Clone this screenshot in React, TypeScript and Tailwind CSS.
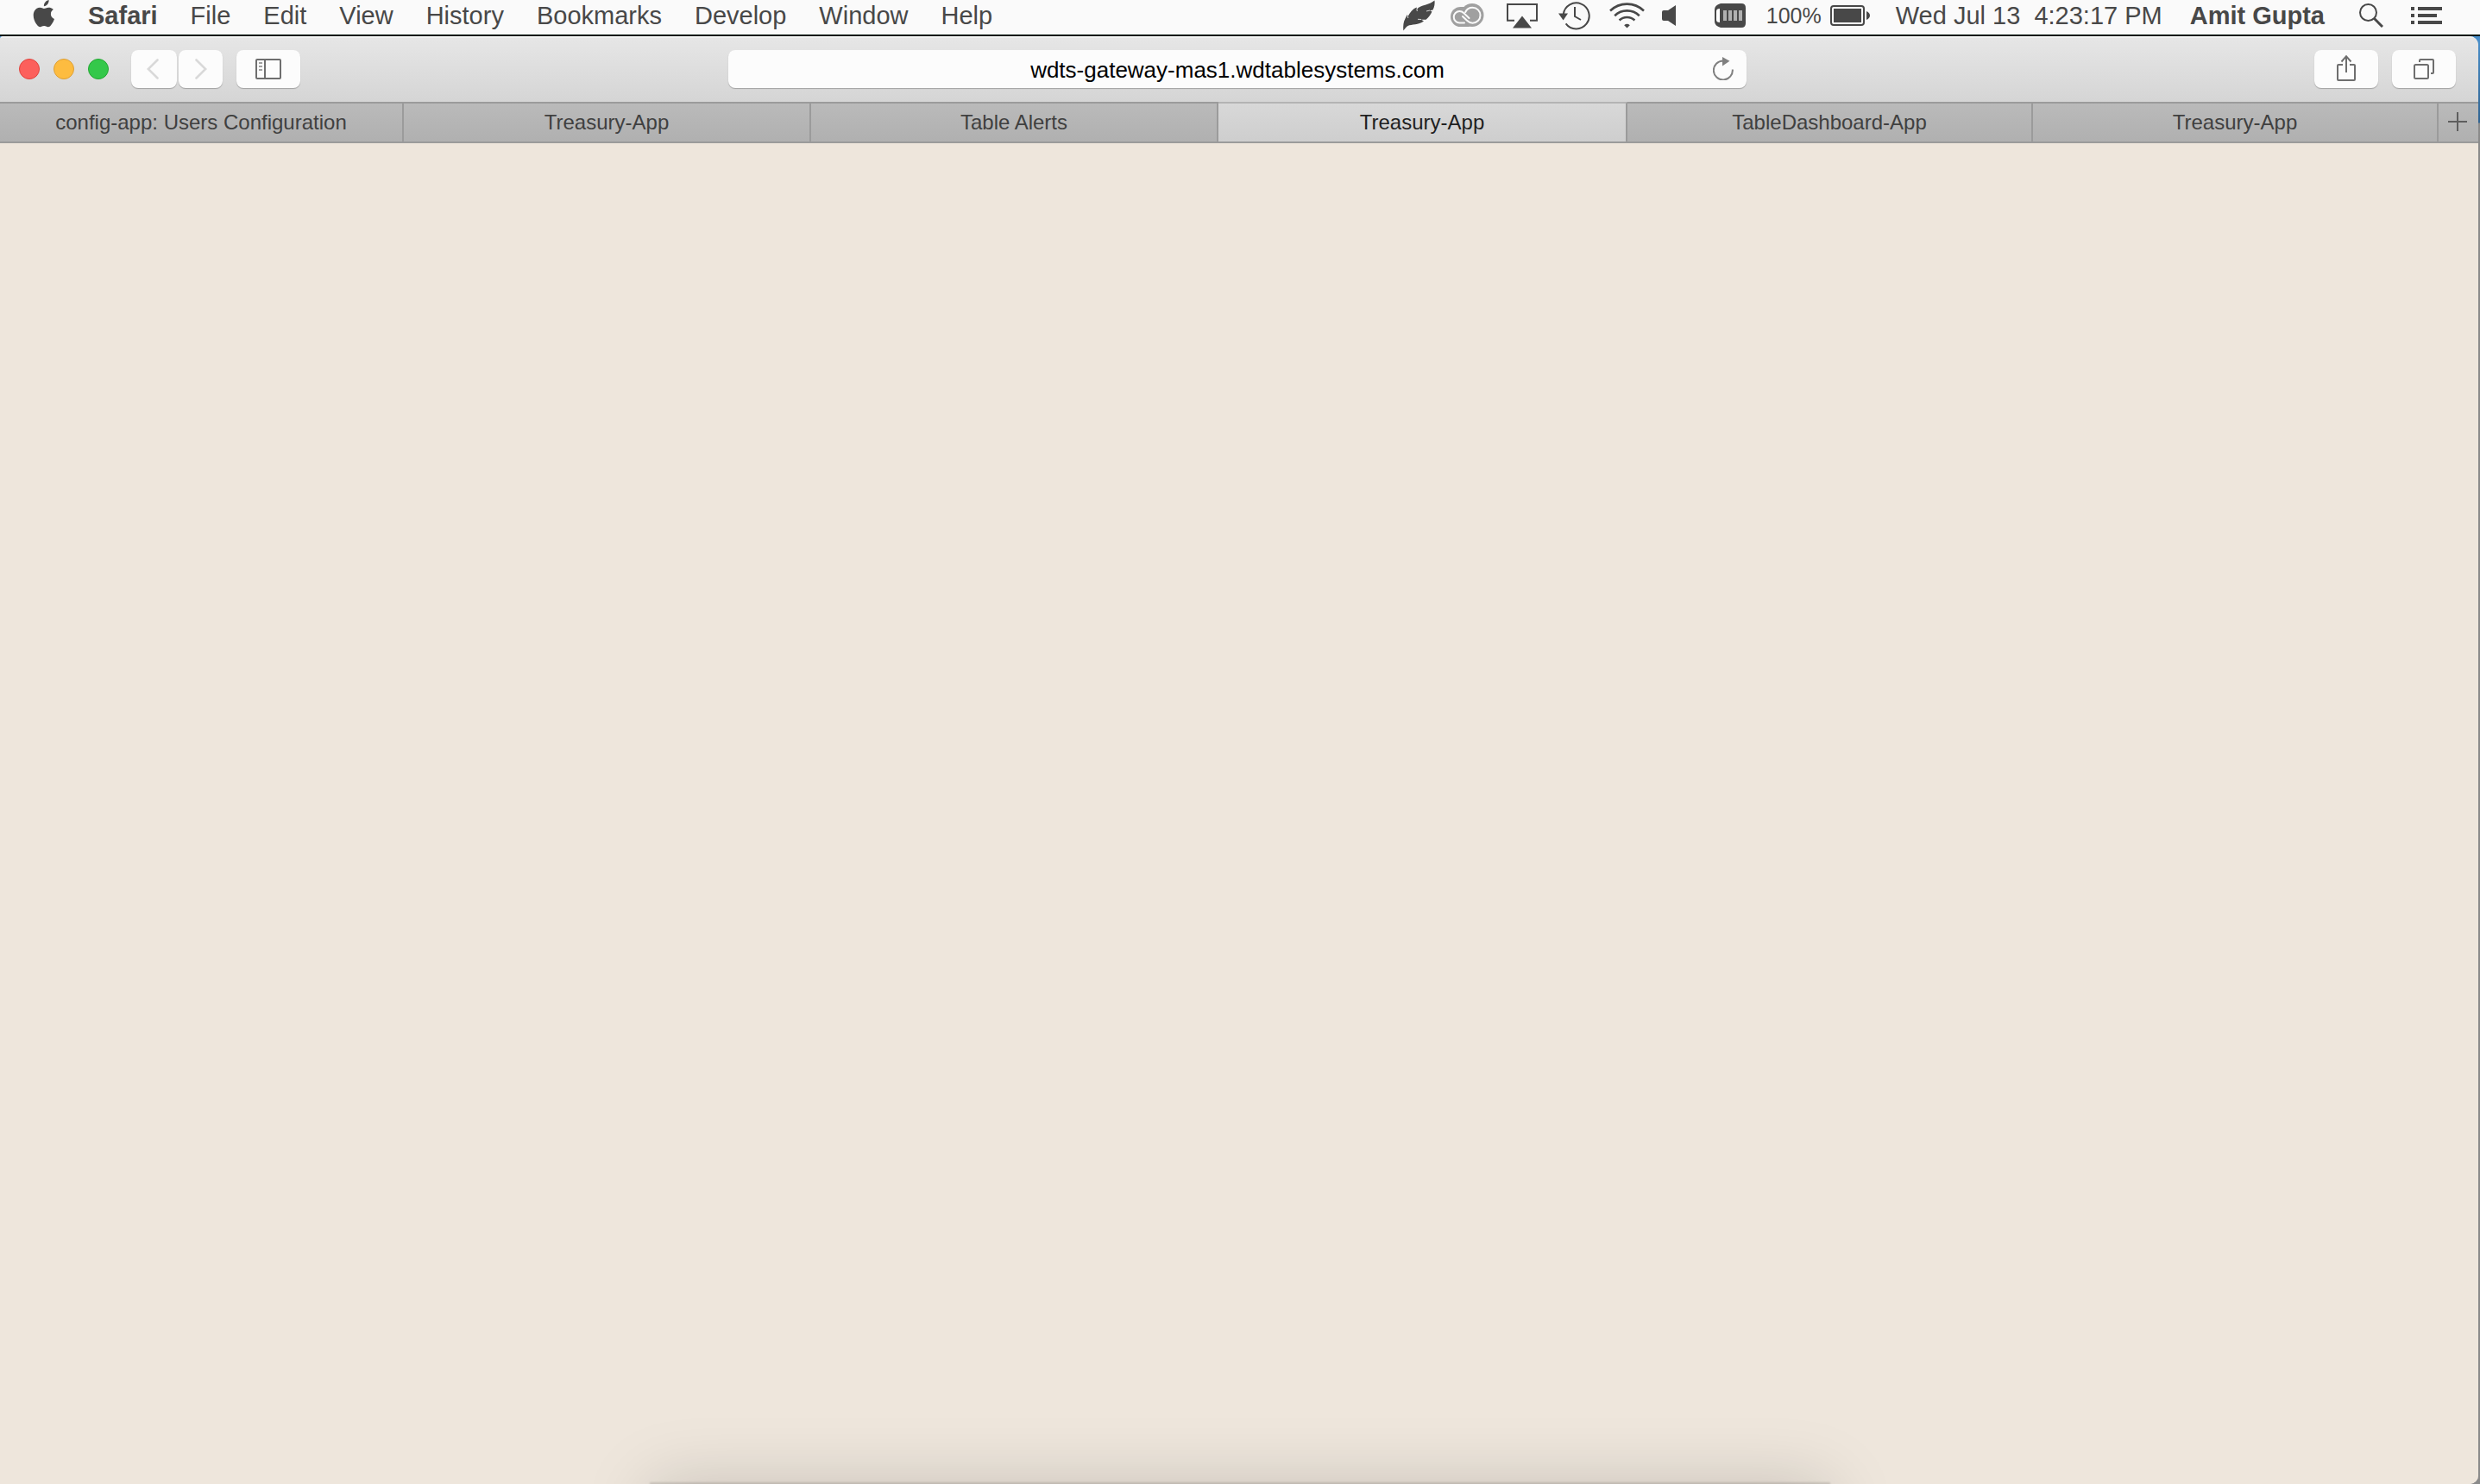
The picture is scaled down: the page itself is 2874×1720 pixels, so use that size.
import React from "react";

const menus = ["File", "Edit", "View", "History", "Bookmarks", "Develop", "Window", "Help"];

const tabs = [
  { title: "config-app: Users Configuration", active: false },
  { title: "Treasury-App", active: false },
  { title: "Table Alerts", active: false },
  { title: "Treasury-App", active: true },
  { title: "TableDashboard-App", active: false },
  { title: "Treasury-App", active: false },
];

const toolButton =
  "flex h-11 items-center justify-center rounded-lg bg-[#fcfcfc] shadow-[0_1px_1px_rgba(0,0,0,0.25)]";

function AppleIcon() {
  return (
    <svg width="26" height="32" viewBox="0 0 26 32" fill="#484848">
      <path d="M18.6 0C18.8 2 18 3.900 16.800 5.300 15.600 6.700 14 7.300 12.900 7.200 12.700 5.300 13.500 3.500 14.700 2.200 15.800 1 17.400 0.100 18.600 0Z" />
      <path d="M24.900 11C23 12.200 21.900 13.900 21.900 16.200 21.900 18.900 23.500 21 26 22 25.400 23.900 24.400 25.900 23.100 27.700 21.900 29.500 20.700 31.200 18.800 31.200 16.900 31.300 16.300 30.100 14.100 30.100 11.900 30.100 11.200 31.200 9.400 31.300 7.500 31.400 6.200 29.400 4.900 27.600 2.300 23.900 0.300 17.200 3 12.600 4.300 10.300 6.700 8.900 9.200 8.800 11.100 8.800 12.800 10 14 10 15.200 10 17.300 8.500 19.700 8.700 20.700 8.700 23.400 9.100 24.900 11Z" transform="translate(-1 0)" />
    </svg>
  );
}

function FeatherIcon() {
  return (
    <svg width="37" height="36" viewBox="0 0 37 36" fill="#484848">
      <path d="M0.300 35.500C0 30 0.300 25 2.500 21.500L4.800 17 5.600 19C8 14.500 11 10.500 15.600 8.500L16 10.500C21 5.500 30 6 36.500 0.500 36.900 4 36.500 8 34.500 11.500L31 12.300 33.500 13.500C32 17 29.500 20.500 26.500 22.800L21 22.800 24 24.500C18 29 10 28 5.500 30 3.500 31 2 33.500 0.300 35.500Z" />
      <path d="M31 12L27 13M21 22.500L17 22.300M15.900 10L16.300 13M5.400 18.500L5.800 21" stroke="#fafafa" strokeWidth="0.800" />
    </svg>
  );
}

function CloudIcon() {
  return (
    <svg width="39" height="28" viewBox="0 0 39 28">
      <rect x="0" y="4" width="30" height="23" rx="11.500" fill="#a0a0a0" />
      <circle cx="25" cy="13.500" r="13.500" fill="#a0a0a0" />
      <path
        d="M16 22.500H10.500A6.500 6.500 0 0 1 10.500 9C12.500 9 14 9.800 15.500 11.200L21.500 17M14 15L19 19.800C21 21.700 22.800 22.700 25.500 22.700A9 9 0 0 0 25.500 4.700C21.500 4.700 18.500 7 17.200 10"
        fill="none" stroke="#fafafa" strokeWidth="2" strokeLinecap="round"
      />
    </svg>
  );
}

function AirplayIcon() {
  return (
    <svg width="36" height="29" viewBox="0 0 36 29">
      <path d="M9 19.800H1V1H35V19.800H27" fill="none" stroke="#484848" strokeWidth="2" />
      <path d="M18 14.500L29 28.500H7Z" fill="#484848" />
    </svg>
  );
}

function TimeMachineIcon() {
  return (
    <svg width="37" height="33" viewBox="0 0 37 33" fill="none" stroke="#484848" strokeWidth="2">
      <path d="M5.800 14.500A15 15 0 1 1 8.600 25.300" />
      <path d="M0 13.500H11L5.600 21.500Z" fill="#484848" stroke="none" />
      <path d="M19 6V17L26 21" />
    </svg>
  );
}

function WifiIcon() {
  return (
    <svg width="41" height="30" viewBox="0 0 41 30" fill="none" stroke="#484848" strokeWidth="2.600">
      <path d="M1 9.500A28 28 0 0 1 40 9.500" />
      <path d="M6.200 15.200A20.500 20.500 0 0 1 34.800 15.200" />
      <path d="M11.600 20.500A13 13 0 0 1 29.400 20.500" />
      <path d="M20.500 29.500L17.200 26.200A5 5 0 0 1 23.800 26.200Z" fill="#484848" stroke="none" />
    </svg>
  );
}

function SpeakerIcon() {
  return (
    <svg width="17" height="24" viewBox="0 0 17 24" fill="#484848">
      <path d="M2 6H7L16 0V24L7 18H2Q0 18 0 16V8Q0 6 2 6Z" />
    </svg>
  );
}

function MeterIcon() {
  return (
    <svg width="36" height="28" viewBox="0 0 36 28">
      <path d="M7 0H31Q36 0 36 5V23Q36 28 31 28H7Q0 26 0 21V7Q0 2 7 0Z" fill="#484848" />
      <path d="M6 6Q2 6 2 9V19Q2 22 6 22Z" fill="#fff" />
      <path d="M12 8V20M18 8V20M24 8V20M30 8V20" stroke="#b0b0b0" strokeWidth="4" />
    </svg>
  );
}

function BatteryIcon() {
  return (
    <svg width="46" height="24" viewBox="0 0 46 24">
      <rect x="1" y="1" width="38" height="22" rx="3" fill="none" stroke="#484848" strokeWidth="2" />
      <rect x="4" y="4" width="32" height="16" fill="#484848" />
      <path d="M42 7Q46 9 46 12T42 17Z" fill="#484848" />
    </svg>
  );
}

function SearchIcon() {
  return (
    <svg width="28" height="28" viewBox="0 0 28 28" fill="none" stroke="#484848">
      <circle cx="10.500" cy="10.500" r="9.500" strokeWidth="2" />
      <path d="M17.500 17.500L27 27" strokeWidth="3" />
    </svg>
  );
}

function ListIcon() {
  return (
    <svg width="36" height="20" viewBox="0 0 36 20" fill="#484848">
      <path d="M0 0H4V4H0ZM8 0H36V4H8ZM0 8H4V12H0ZM8 8H30V12H8ZM0 16H4V20H0ZM8 16H36V20H8Z" />
    </svg>
  );
}

function MenuBar() {
  return (
    <header className="flex h-10 shrink-0 items-start bg-[#fafafa] pr-11 pl-[38px] text-[29px] leading-9 text-[#484848]">
      <nav aria-label="Application menu" className="flex gap-[38px] whitespace-nowrap">
        <button aria-label="Apple" className="flex"><AppleIcon /></button>
        <button className="font-bold">Safari</button>
        {menus.map((m) => (
          <button key={m}>{m}</button>
        ))}
      </nav>
      <div className="ml-auto flex h-9 items-center whitespace-nowrap">
        <button aria-label="Notes"><FeatherIcon /></button>
        <button aria-label="Creative Cloud" className="ml-[18px]"><CloudIcon /></button>
        <button aria-label="AirPlay" className="ml-[26px]"><AirplayIcon /></button>
        <button aria-label="Time Machine" className="ml-6"><TimeMachineIcon /></button>
        <button aria-label="Wi-Fi" className="ml-[22px]"><WifiIcon /></button>
        <button aria-label="Volume" className="ml-5"><SpeakerIcon /></button>
        <button aria-label="Memory" className="ml-11"><MeterIcon /></button>
        <button aria-label="Battery" className="ml-6 flex items-center gap-[10px] text-[25px]"><span>100%</span><BatteryIcon /></button>
        <button className="ml-[30px] whitespace-pre">{"Wed Jul 13  4:23:17 PM"}</button>
        <button className="ml-8 font-bold">Amit Gupta</button>
        <button aria-label="Search" className="ml-10"><SearchIcon /></button>
        <button aria-label="Notification Center" className="ml-8"><ListIcon /></button>
      </div>
    </header>
  );
}

function Toolbar() {
  return (
    <div className="grid h-[76px] grid-cols-[1fr_41.8%_1fr] items-center border-t-2 border-[#f3f3f3] bg-linear-to-b from-[#e6e6e6] to-[#d5d5d5] pr-[26px] pb-0.5 pl-[22px]">
      <div className="flex items-center">
        <div className="flex gap-4">
          <button aria-label="Close" className="size-6 rounded-full border border-[#e0443e] bg-[#fc605c]" />
          <button aria-label="Minimize" className="size-6 rounded-full border border-[#dd9f35] bg-[#fdbc40]" />
          <button aria-label="Zoom" className="size-6 rounded-full border border-[#24a833] bg-[#34c84a]" />
        </div>
        <div className="ml-[26px] flex gap-0.5">
          <button aria-label="Back" className={`${toolButton} w-[53px] pr-1`}>
            <svg width="14" height="24" viewBox="0 0 14 24" fill="none" stroke="#d9d9d9" strokeWidth="2.600" strokeLinecap="round">
              <path d="M12.500 1.500L1.800 12L12.500 22.500" />
            </svg>
          </button>
          <button aria-label="Forward" className={`${toolButton} w-[51px]`}>
            <svg width="14" height="24" viewBox="0 0 14 24" fill="none" stroke="#d9d9d9" strokeWidth="2.600" strokeLinecap="round">
              <path d="M1.500 1.500L12.200 12L1.500 22.500" />
            </svg>
          </button>
        </div>
        <button aria-label="Show sidebar" className={`${toolButton} ml-4 w-[74px]`}>
          <svg width="30" height="24" viewBox="0 0 30 24" fill="none" stroke="#6e6e6e" strokeWidth="2">
            <rect x="1" y="1" width="28" height="22" rx="1" />
            <path d="M11 1V23" />
            <path d="M4 5H8M4 9H8M4 13H8" stroke="#a0a0a0" />
          </svg>
        </button>
      </div>

      <div className="flex h-11 items-center rounded-lg bg-[#fcfcfc] pl-[42px] shadow-[0_1px_1px_rgba(0,0,0,0.25)]">
        <input
          aria-label="Address"
          defaultValue="wdts-gateway-mas1.wdtablesystems.com"
          className="h-11 min-w-0 flex-1 bg-transparent pt-0.5 text-center text-[26px] text-black outline-none"
        />
        <button aria-label="Reload" className="flex w-[42px] justify-center pr-3 pb-0.5">
          <svg width="24" height="27" viewBox="0 0 24 27">
            <path d="M22.800 14.500A11 11 0 1 1 12 4.500" fill="none" stroke="#808080" strokeWidth="2" />
            <path d="M11 0L19.500 4.800L11 10.500Z" fill="#808080" />
          </svg>
        </button>
      </div>

      <div className="flex justify-end gap-4">
        <button aria-label="Share" className={`${toolButton} w-[74px] pb-0.5`}>
          <svg width="24" height="32" viewBox="0 0 24 32" fill="none" stroke="#6e6e6e" strokeWidth="2">
            <path d="M8 12H3Q2 12 2 13V29Q2 30 3 30H21Q22 30 22 29V13Q22 12 21 12H16" />
            <path d="M12 21V2M6.500 8.500L12 2.200L17.500 8.500" />
          </svg>
        </button>
        <button aria-label="Show all tabs" className={`${toolButton} w-[74px]`}>
          <svg width="24" height="24" viewBox="0 0 24 24" fill="none" stroke="#6e6e6e" strokeWidth="2">
            <rect x="1" y="7" width="16" height="16" rx="1.500" />
            <path d="M7 4V2Q7 1 8 1H22Q23 1 23 2V16Q23 17 22 17H20" />
          </svg>
        </button>
      </div>
    </div>
  );
}

function TabBar() {
  return (
    <div role="tablist" className="grid h-12 grid-cols-[468fr_472fr_472fr_474fr_470fr_470fr_46px] text-2xl">
      {tabs.map((t, i) => (
        <button
          key={i}
          role="tab"
          aria-selected={t.active}
          className={
            t.active
              ? "border-y-2 border-r-2 border-[#9b9b9b] border-t-[#b4b4b4] bg-linear-to-b from-[#d8d8d8] to-[#cecece] text-[#1f1f1f]"
              : "border-y-2 border-r-2 border-[#9b9b9b] bg-linear-to-b from-[#bababa] to-[#b0b0b0] text-[#404040]"
          }
        >
          {t.title}
        </button>
      ))}
      <button aria-label="New tab" className="flex items-center justify-center border-y-2 border-[#9b9b9b] bg-linear-to-b from-[#bababa] to-[#b0b0b0] pr-0.5 pb-0.5">
        <svg width="22" height="22" viewBox="0 0 22 22" stroke="#5e5e5e" strokeWidth="2">
          <path d="M11 0V22M0 11H22" />
        </svg>
      </button>
    </div>
  );
}

export default function App() {
  return (
    <div className="relative flex h-screen flex-col overflow-hidden bg-[#04170d] font-['Liberation_Sans',Arial,sans-serif]">
      <MenuBar />
      <div className="mt-0.5 flex min-h-0 flex-1 bg-linear-to-b from-[#4a90cc] from-0% via-[#2f6391] via-[100px] to-[#8a8a8a] to-[101px] pr-0.5">
        <div className="flex min-w-0 flex-1 flex-col overflow-hidden rounded-r-[10px] rounded-tl-sm bg-[#eee6dc]">
          <Toolbar />
          <TabBar />
          <main className="flex-1 bg-[#eee6dc]" />
        </div>
      </div>
      <div className="absolute inset-x-[755px] top-full h-24 shadow-[0_0_2px_2px_rgba(0,0,0,0.12),0_0_80px_rgba(0,0,0,0.17)]" />
    </div>
  );
}
